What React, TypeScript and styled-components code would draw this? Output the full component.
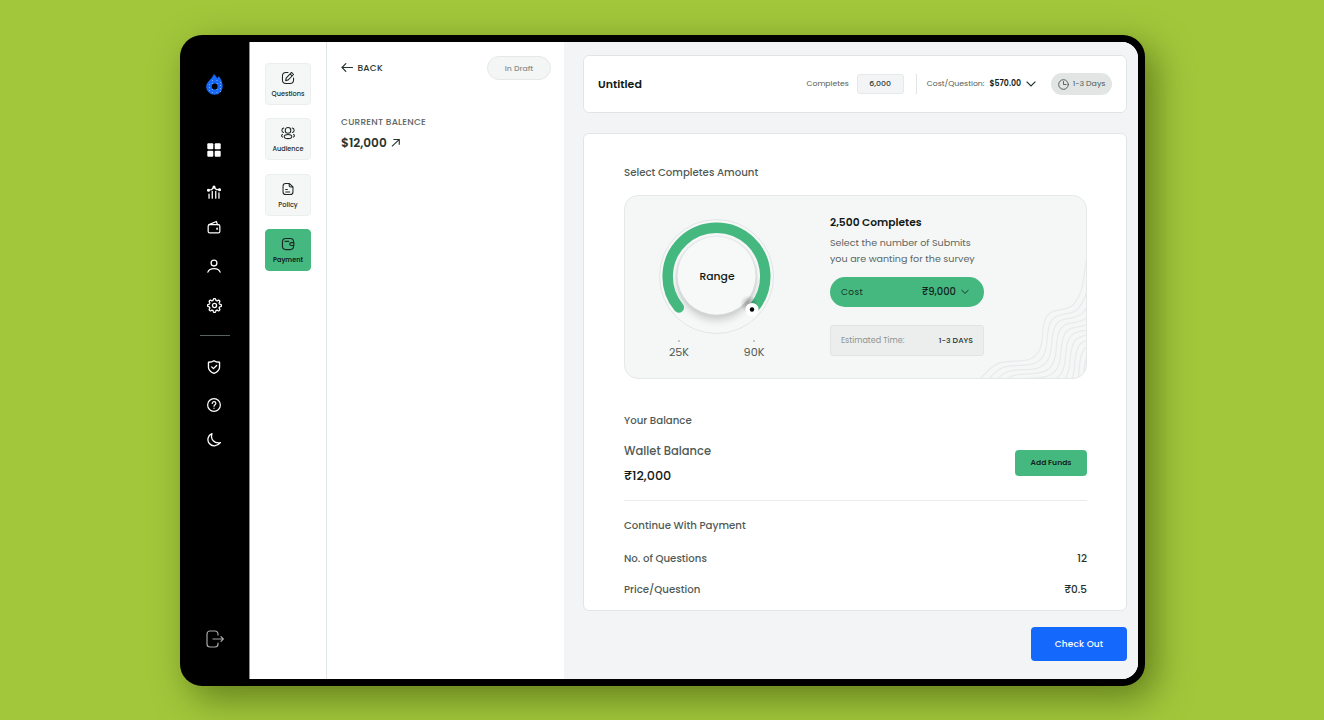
import React from "react";
import styled, { createGlobalStyle } from "styled-components";

const GlobalStyle = createGlobalStyle`
  *, *::before, *::after { box-sizing: border-box; }
  body {
    margin: 0;
    background: #a2c73b;
    font-family: Poppins, Inter, "Liberation Sans", sans-serif;
    overflow: hidden;
  }
`;

const Stage = styled.div`
  width: 1324px;
  height: 720px;
  padding: 35px 0 0 180px;
  background: #a2c73b;
`;

const Device = styled.div`
  display: flex;
  width: 965px;
  height: 651px;
  padding: 7px 7px 7px 0;
  border-radius: 22px;
  background: #000;
  box-shadow: 10px 12px 36px rgba(40, 60, 0, 0.52);
`;

const Sidebar = styled.nav`
  display: flex;
  flex-direction: column;
  align-items: center;
  width: 69px;
  padding: 30px 1px 0 0;
  color: #fff;
`;

const SideItem = styled.div<{ $gap: number; $h?: number; $shift?: number }>`
  display: flex;
  align-items: center;
  justify-content: center;
  width: 100%;
  height: ${(p) => p.$h ?? 20}px;
  margin-top: ${(p) => p.$gap}px;
  padding-left: ${(p) => p.$shift ?? 0}px;
  flex: none;
`;

const SideRule = styled.hr`
  width: 30px;
  height: 1px;
  margin: 20px 0 0 1px;
  border: 0;
  background: #56635d;
  flex: none;
`;

const Screen = styled.div`
  display: flex;
  flex: 1;
  background: #fff;
  border-radius: 0 16px 16px 0;
  border-left: 1px solid #8d908f;
  overflow: hidden;
`;

const Steps = styled.div`
  display: flex;
  flex-direction: column;
  gap: 13.3px;
  width: 77px;
  padding: 21px 0 0 15px;
  border-right: 1px solid #e0e5e5;
`;

const Step = styled.div<{ $active?: boolean }>`
  display: flex;
  flex-direction: column;
  align-items: center;
  gap: 1px;
  width: 46px;
  height: 42px;
  padding-top: 7px;
  border-radius: 4px;
  border: 1px solid ${(p) => (p.$active ? "#45b880" : "#ebeeee")};
  background: ${(p) => (p.$active ? "#45b880" : "#f5f7f7")};
  color: #1d2823;
`;

const Label = styled.span<{ $size: number; $weight?: number; $ls?: number; $color?: string }>`
  font-size: ${(p) => p.$size}px;
  font-weight: ${(p) => p.$weight ?? 400};
  letter-spacing: ${(p) => p.$ls ?? 0}px;
  color: ${(p) => p.$color ?? "#505a56"};
  line-height: 16px;
  white-space: nowrap;
`;

const Panel = styled.section`
  width: 237px;
  padding: 14px 13px 0 14px;
`;

const PanelTop = styled.div`
  display: flex;
  align-items: center;
  justify-content: space-between;
  height: 24px;
`;

const Back = styled.div`
  display: flex;
  align-items: center;
  gap: 4px;
  color: #26342e;
`;

const DraftPill = styled.div`
  display: flex;
  align-items: center;
  justify-content: center;
  width: 64px;
  height: 24px;
  padding-top: 1px;
  border: 1px solid #e4e8e7;
  border-radius: 12px;
  background: #f4f6f6;
`;

const BalanceBlock = styled.div`
  display: flex;
  flex-direction: column;
  gap: 5px;
  margin-top: 34px;
`;

const Inline = styled.div<{ $gap?: number }>`
  display: flex;
  align-items: center;
  gap: ${(p) => p.$gap ?? 0}px;
`;

const Main = styled.main`
  flex: 1;
  padding: 13px 11px 0 19px;
  background: #f3f4f6;
`;

const HeaderCard = styled.header`
  display: flex;
  align-items: center;
  height: 58px;
  padding: 0 14px;
  border: 1px solid #e0e5e5;
  border-radius: 6px;
  background: #fff;
`;

const HeaderTools = styled.div`
  display: flex;
  align-items: center;
  margin-left: auto;
`;

const CountBox = styled.div`
  display: flex;
  align-items: center;
  justify-content: center;
  width: 47px;
  height: 20px;
  margin: 0 12px 0 8px;
  border: 1px solid #e6e9ea;
  border-radius: 3px;
  background: #f3f4f6;
`;

const Divider = styled.div`
  width: 1px;
  height: 20px;
  margin-right: 10px;
  background: #e0e5e5;
`;

const DaysPill = styled.div`
  display: flex;
  align-items: center;
  justify-content: center;
  gap: 4px;
  width: 61px;
  height: 22px;
  margin-left: 15px;
  border-radius: 11px;
  background: #e1e5e4;
`;

const PaymentCard = styled.section`
  height: 478px;
  margin-top: 20px;
  padding: 31px 39px 0 40px;
  border: 1px solid #e0e5e5;
  border-radius: 6px;
  background: #fff;
`;

const RangeCard = styled.div`
  position: relative;
  display: flex;
  height: 184px;
  margin-top: 14px;
  border: 1px solid #e4e8e8;
  border-radius: 14px;
  background: #f5f7f7;
  overflow: hidden;
`;

const Contours = styled.svg`
  position: absolute;
  right: -1px;
  bottom: -1px;
`;

const Dial = styled.div`
  width: 205px;
  padding: 21px 0 0 32px;
`;

const DialFace = styled.div`
  position: relative;
  width: 120px;
  height: 120px;
`;

const DialText = styled.div`
  position: absolute;
  inset: 0;
  display: flex;
  align-items: center;
  justify-content: center;
`;

const Scale = styled.div`
  display: flex;
  justify-content: space-between;
  width: 99px;
  margin: 3px 0 0 10px;
`;

const Tick = styled.div`
  display: flex;
  flex-direction: column;
  align-items: center;
  width: 24px;
  gap: 2px;
  &::before {
    content: "";
    width: 2px;
    height: 2px;
    border-radius: 50%;
    background: #b2b8b6;
  }
`;

const Details = styled.div`
  display: flex;
  flex-direction: column;
  width: 154px;
  padding-top: 19px;
`;

const Hint = styled.p`
  margin: 4px 0 0;
  font-size: 9.55px;
  line-height: 16px;
  color: #5d6662;
  white-space: nowrap;
`;

const CostButton = styled.div`
  display: flex;
  align-items: center;
  justify-content: space-between;
  height: 30px;
  margin-top: 9.500px;
  padding: 0 15px 0 11px;
  border-radius: 15px;
  background: #45b880;
`;

const Estimate = styled.div`
  display: flex;
  align-items: center;
  justify-content: space-between;
  height: 31px;
  margin-top: 18.500px;
  padding: 0 10px;
  border: 1px solid #e0e4e3;
  border-radius: 3px;
  background: #ebeeed;
`;

const Wallet = styled.div`
  display: flex;
  align-items: center;
  justify-content: space-between;
  height: 72px;
  padding-bottom: 3px;
  border-bottom: 1px solid #e9ecec;
`;

const WalletText = styled.div`
  display: flex;
  flex-direction: column;
  gap: 9px;
`;

const AddFunds = styled.div`
  display: flex;
  align-items: center;
  justify-content: center;
  width: 72px;
  height: 26px;
  border-radius: 4px;
  background: #45b880;
`;

const Row = styled.div<{ $top: number }>`
  display: flex;
  justify-content: space-between;
  height: 16px;
  margin-top: ${(p) => p.$top}px;
`;

const CheckOut = styled.div`
  display: flex;
  align-items: center;
  justify-content: center;
  width: 96px;
  height: 34px;
  margin: 16px 0 0 auto;
  border-radius: 4px;
  background: #1468fb;
`;

type IconProps = { size: number; sw?: number; color?: string; children: React.ReactNode };
const Icon = ({ size, sw = 1.8, color = "currentColor", children }: IconProps) => (
  <svg width={size} height={size} viewBox="0 0 24 24" fill="none" stroke={color} strokeWidth={sw} strokeLinecap="round" strokeLinejoin="round">
    {children}
  </svg>
);

const Logo = () => (
  <svg width="19" height="23" viewBox="0 0 19 23">
    <path d="M9 .8c.8 1.600 2.300 2.600 3.300 4.400.7-.5 1-1.200 1.100-2 2.400 1.800 4.300 6 4.300 9.800 0 5-3.500 8.800-8.100 8.800S1.200 18 1.200 13.500C1.200 9 7.500 6 9 .8z" fill="#1769f7" />
    <path d="M7.500 7v14M12 7v14M4.500 11v8M15.500 9v10" stroke="#9cc0ff" strokeWidth=".9" strokeDasharray=".9 2.100" />
    <circle cx="9.700" cy="13.500" r="2.900" fill="#000" />
  </svg>
);

const gear = Array.from({ length: 96 }, (_, i) => {
  const a = (i / 96) * Math.PI * 2;
  const r = 9.7 + 1.4 * Math.tanh(2 * Math.cos(8 * a));
  return `${(12 + r * Math.cos(a)).toFixed(2)} ${(12 + r * Math.sin(a)).toFixed(2)}`;
}).join("L");

const contourSteps = Array.from({ length: 16 }, (_, i) => i);

const App = () => (
  <>
    <GlobalStyle />
    <Stage>
      <Device>
        <Sidebar>
          <SideItem $gap={0} $h={24} $shift={1}><Logo /></SideItem>
          <SideItem $gap={44}>
            <svg width="14" height="14" viewBox="0 0 14 14" fill="#fff">
              <rect x="0.300" y="0.300" width="6" height="6" rx="1" /><rect x="7.700" y="0.300" width="6" height="6" rx="1" />
              <rect x="0.300" y="7.700" width="6" height="6" rx="1" /><rect x="7.700" y="7.700" width="6" height="6" rx="1" />
            </svg>
          </SideItem>
          <SideItem $gap={22}>
            <Icon size={14} sw={2.2}>
              <path d="M3.500 22.500v-7M9 22.500V11M15 22.500V11M20.500 22.500v-9M3 8.500l4.500-.5L12 4l4.500 4 4.500-.5" />
              <g fill="currentColor"><circle cx="2.500" cy="9" r="1.500" /><circle cx="12" cy="3.500" r="1.600" /><circle cx="21.500" cy="8" r="1.500" /></g>
            </Icon>
          </SideItem>
          <SideItem $gap={15}>
            <Icon size={14} sw={2.1}>
              <rect x="2" y="8" width="20" height="14" rx="2.500" />
              <path d="M3.500 8L16 2.500 18 8" /><path d="M17.300 14v1.800" strokeWidth="2.600" />
            </Icon>
          </SideItem>
          <SideItem $gap={19}>
            <Icon size={14} sw={2.2}><circle cx="12" cy="7" r="5" /><path d="M1.500 22.500c1.500-4.500 6-6 10.500-6s9 1.500 10.500 6" /></Icon>
          </SideItem>
          <SideItem $gap={19}>
            <Icon size={15} sw={2.1}><path d={`M${gear}Z`} /><circle cx="12" cy="12" r="3.300" /></Icon>
          </SideItem>
          <SideRule />
          <SideItem $gap={21}>
            <Icon size={14} sw={2.300}><path d="M12 1.300c2.500 1.800 6 2.400 9.500 2.500v8.500c0 5-4.500 8.500-9.500 10.500-5-2-9.500-5.500-9.500-10.500V3.800c3.500-.1 7-.7 9.500-2.500z" /><path d="M8 11.800l3 3 5.500-5.500" /></Icon>
          </SideItem>
          <SideItem $gap={18}>
            <Icon size={14} sw={2.1}><circle cx="12" cy="12" r="10.900" /><path d="M9 9.300c0-4 6.200-3.700 6.200-.2 0 2.200-3.200 2.500-3.200 4.900M12 17.400v.3" /></Icon>
          </SideItem>
          <SideItem $gap={15}>
            <Icon size={14} sw={2.200}><path d="M8.500 1.200C1.500 4-.5 12.500 4 18S17.500 23.500 23 16.500C12.500 18.500 5.500 11 8.500 1.200z" /></Icon>
          </SideItem>
          <SideItem $gap={179} $shift={1}>
            <svg width="18" height="18" viewBox="0 0 18 18" fill="none" stroke="#a5aaa8" strokeWidth="1.200" strokeLinecap="round" strokeLinejoin="round">
              <path d="M12 5V4a3 3 0 0 0-3-3H4a3 3 0 0 0-3 3v10a3 3 0 0 0 3 3h5a3 3 0 0 0 3-3v-1M7 9h10.300M15 6.700L17.300 9 15 11.300" />
            </svg>
          </SideItem>
        </Sidebar>
        <Screen>
          <Steps>
            <Step>
              <Icon size={14}><path d="M12 2.500H8.500c-4 0-6 2-6 6v7c0 4 2 6 6 6h7c4 0 6-2 6-6V12" /><path d="M18 2.500l3.500 3.500L12 15.500 8 16.500l.8-4.300zM15.500 5l3.500 3.500" /></Icon>
              <Label $size={6.5} $weight={500} $color="#202b26">Questions</Label>
            </Step>
            <Step>
              <Icon size={14}><circle cx="12" cy="7.500" r="4.800" /><ellipse cx="12" cy="18" rx="6.500" ry="3.600" /><path d="M4.800 3.500C.5 4 .5 10.500 4.500 11M19.200 3.500C23.500 4 23.500 10.500 19.500 11M2.500 14.500c-2 1-2 3.500 0 4.500M21.500 14.500c2 1 2 3.500 0 4.500" /></Icon>
              <Label $size={6.5} $weight={500} $color="#202b26">Audience</Label>
            </Step>
            <Step>
              <Icon size={14}><path d="M14 2.500H8c-3 0-4.500 1.500-4.500 4.500v10c0 3 1.500 4.500 4.500 4.500h8c3 0 4.500-1.500 4.500-4.500V8.500zM14 2.500V6c0 1.800.8 2.500 2.500 2.500h4M8 13h3M8 17h7" /></Icon>
              <Label $size={6.6} $weight={500} $color="#202b26">Policy</Label>
            </Step>
            <Step $active>
              <Icon size={14} sw={2}><path d="M21.500 8C21.500 4.500 19.500 2.500 16 2.500H8C4.500 2.500 2.500 4.500 2.500 8v8c0 3.500 2 5.500 5.500 5.500h8c3.500 0 5.500-2 5.500-5.500M22 9.500h-4.500c-3.300 0-3.300 5 0 5H22zM7 7.500h6" /></Icon>
              <Label $size={6.5} $weight={600} $color="#12241b">Payment</Label>
            </Step>
          </Steps>
          <Panel>
            <PanelTop>
              <Back>
                <svg width="12.500" height="10" viewBox="0 0 12.500 10" fill="none" stroke="currentColor" strokeWidth="1.200" strokeLinecap="round"><path d="M11.500 4.500H1M4.800.7L1 4.500l3.800 3.800" /></svg>
                <Label $size={9} $weight={500} $ls={0.2} $color="#26342e">BACK</Label>
              </Back>
              <DraftPill><Label $size={7.8} $weight={500} $color="#8a918e">In Draft</Label></DraftPill>
            </PanelTop>
            <BalanceBlock>
              <Label $size={9} $weight={500} $ls={0.2} $color="#5d6662">CURRENT BALENCE</Label>
              <Inline $gap={4}>
                <Label $size={12.1} $weight={600} $color="#26342e">$12,000</Label>
                <svg width="9.500" height="10" viewBox="0 0 10 10" fill="none" stroke="#26342e" strokeWidth="1.200"><path d="M1 8.500L8.500 1.500M2.500 1.300h6.200v5.500" /></svg>
              </Inline>
            </BalanceBlock>
          </Panel>
          <Main>
            <HeaderCard>
              <Label $size={11} $weight={600} $color="#111a16">Untitled</Label>
              <HeaderTools>
                <Label $size={7.7}>Completes</Label>
                <CountBox><Label $size={7.8} $weight={500} $color="#26342e">6,000</Label></CountBox>
                <Divider />
                <Inline $gap={5}>
                  <Label $size={7.75}>Cost/Question:</Label>
                  <Label $size={7.8} $weight={600} $color="#111a16">$570.00</Label>
                  <svg width="10" height="6" viewBox="0 0 10 6" fill="none" stroke="#26342e" strokeWidth="1.200"><path d="M.6.600L5 5 9.400.600" /></svg>
                </Inline>
                <DaysPill>
                  <Icon size={11} sw={2} color="#4c5652"><circle cx="12" cy="12" r="10.500" /><path d="M12 5.500V12h5.500" /></Icon>
                  <Label $size={7.8}>1-3 Days</Label>
                </DaysPill>
              </HeaderTools>
            </HeaderCard>
            <PaymentCard>
              <Row $top={0}><Label $size={10.2} $weight={500}>Select Completes Amount</Label></Row>
              <RangeCard>
                <Contours width="120" height="120" viewBox="0 0 120 120" fill="none" stroke="#e8ebeb" strokeWidth="1.300">
                  {contourSteps.map((i) => (
                    <path
                      key={i}
                      transform={`translate(${i * 4.6} ${i * 4.2})`}
                      d="M-44 140C-14 134 4 128 13 120C22 111 27 104 37 103C50 101 65 105 72 92C78 81 73 68 80 57C86 48 99 54 107 45C117 33 116 20 119 4C123 -12 130 -30 136 -60"
                    />
                  ))}
                </Contours>
                <Dial>
                  <DialFace>
                    <svg width="120" height="120" viewBox="0 0 120 120" overflow="visible">
                      <defs>
                        <filter id="soft" x="-40%" y="-40%" width="180%" height="180%"><feGaussianBlur stdDeviation="3.500" /></filter>
                        <linearGradient id="rim" x1="0" y1="0" x2="0" y2="1"><stop offset="0" stopColor="#e9eceb" /><stop offset="1" stopColor="#cfd3d2" /></linearGradient>
                        <radialGradient id="knobShade"><stop offset="0" stopColor="#000" stopOpacity=".32" /><stop offset="1" stopColor="#000" stopOpacity="0" /></radialGradient>
                      </defs>
                      <circle cx="59.500" cy="59.500" r="57" fill="#f6f8f8" stroke="#e1e5e4" />
                      <circle cx="59.500" cy="65" r="39" fill="#cfd3d2" filter="url(#soft)" />
                      <circle cx="59.500" cy="59.500" r="41" fill="url(#rim)" />
                      <circle cx="59.500" cy="58.800" r="39" fill="#f7f8f8" />
                      <path d="M21.800 90.500A48.800 48.800 0 1 1 96.900 90.800" stroke="#45b880" strokeWidth="10.500" strokeLinecap="round" fill="none" />
                      <circle cx="92" cy="87" r="9" fill="url(#knobShade)" />
                      <circle cx="95" cy="92.500" r="6.600" fill="#fff" />
                      <circle cx="95" cy="92.500" r="2.200" fill="#000" />
                    </svg>
                    <DialText><Label $size={10.8} $weight={500} $color="#111a16">Range</Label></DialText>
                  </DialFace>
                  <Scale>
                    <Tick><Label $size={11.2}>25K</Label></Tick>
                    <Tick><Label $size={11.2}>90K</Label></Tick>
                  </Scale>
                </Dial>
                <Details>
                  <Label $size={10.7} $weight={600} $color="#111a16">2,500 Completes</Label>
                  <Hint>Select the number of Submits<br />you are wanting for the survey</Hint>
                  <CostButton>
                    <Label $size={9} $ls={0.4} $color="#173024">Cost</Label>
                    <Inline $gap={5}>
                      <Label $size={10} $weight={500} $color="#12241b">₹9,000</Label>
                      <svg width="8" height="6" viewBox="0 0 9 6" fill="none" stroke="#12241b"><path d="M.6.800l3.900 3.800L8.400.800" /></svg>
                    </Inline>
                  </CostButton>
                  <Estimate>
                    <Label $size={8} $color="#8e9592">Estimated Time:</Label>
                    <Label $size={7.8} $weight={500} $color="#26342e">1-3 DAYS</Label>
                  </Estimate>
                </Details>
              </RangeCard>
              <Row $top={34}><Label $size={10.2} $weight={500}>Your Balance</Label></Row>
              <Wallet>
                <WalletText>
                  <Label $size={11.5} $weight={500}>Wallet Balance</Label>
                  <Label $size={12.8} $weight={500} $color="#111a16">₹12,000</Label>
                </WalletText>
                <AddFunds><Label $size={7.6} $weight={600} $color="#12241b">Add Funds</Label></AddFunds>
              </Wallet>
              <Row $top={17}><Label $size={10.2} $weight={500}>Continue With Payment</Label></Row>
              <Row $top={17}>
                <Label $size={10.2} $weight={500}>No. of Questions</Label>
                <Label $size={10.5} $weight={500} $color="#26342e">12</Label>
              </Row>
              <Row $top={15}>
                <Label $size={10.2} $weight={500}>Price/Question</Label>
                <Label $size={10.5} $weight={500} $color="#26342e">₹0.5</Label>
              </Row>
            </PaymentCard>
            <CheckOut><Label $size={9} $weight={500} $ls={0.15} $color="#fff">Check Out</Label></CheckOut>
          </Main>
        </Screen>
      </Device>
    </Stage>
  </>
);

export default App;
